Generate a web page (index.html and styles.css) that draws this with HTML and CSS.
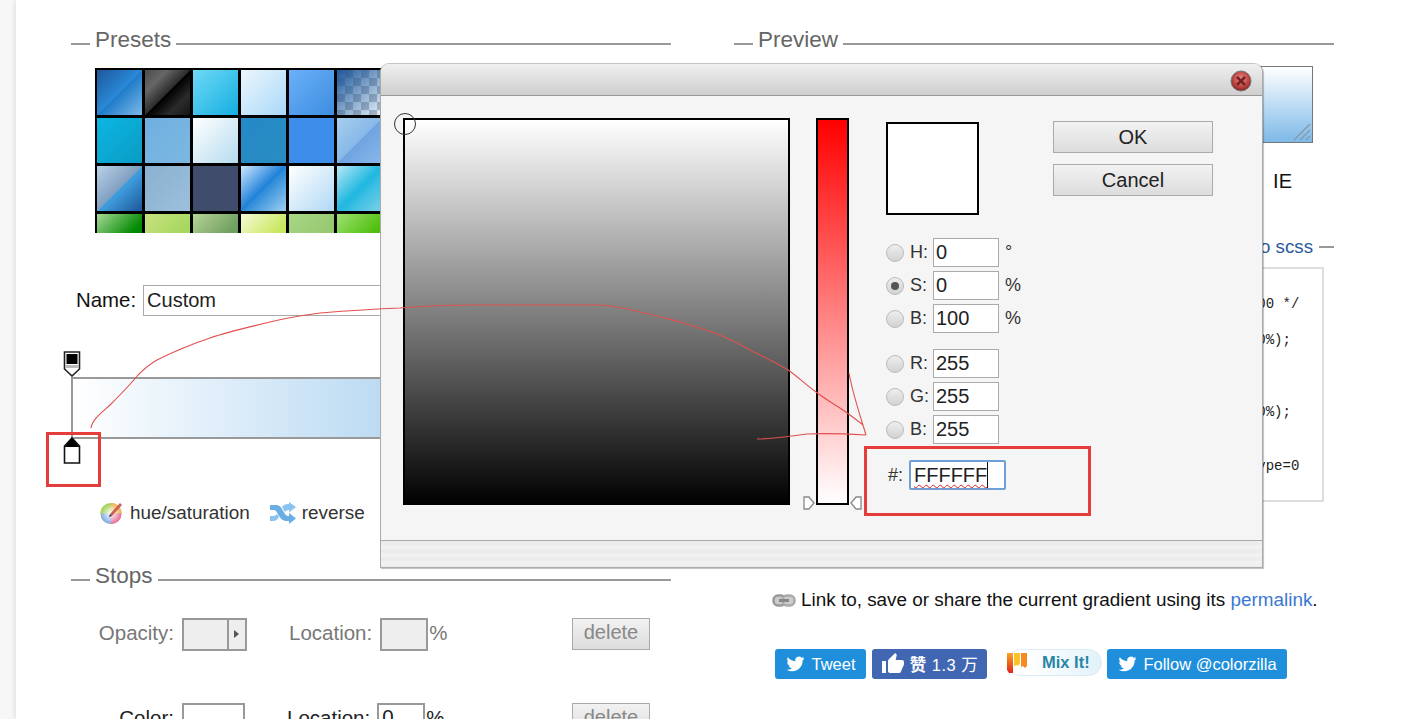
FILE: index.html
```html
<!DOCTYPE html>
<html lang="en">

<head>
  <meta charset="UTF-8">
  <meta name="viewport" content="width=device-width, initial-scale=1.0">
  <title>Gradient Editor</title>
  <link rel="stylesheet" href="styles.css">
</head>

<body>

  <div class="page">

    <div class="col-left">
      <h2 class="section-title"><span>Presets</span></h2>
      <div class="presets">
        <div class="swatch p1"></div><div class="swatch p2"></div><div class="swatch p3"></div><div class="swatch p4"></div><div class="swatch p5"></div><div class="swatch p6"></div>
        <div class="swatch p7"></div><div class="swatch p8"></div><div class="swatch p9"></div><div class="swatch p10"></div><div class="swatch p11"></div><div class="swatch p12"></div>
        <div class="swatch p13"></div><div class="swatch p14"></div><div class="swatch p15"></div><div class="swatch p16"></div><div class="swatch p17"></div><div class="swatch p18"></div>
        <div class="swatch p19"></div><div class="swatch p20"></div><div class="swatch p21"></div><div class="swatch p22"></div><div class="swatch p23"></div><div class="swatch p24"></div>
      </div>

      <div class="name-row">
        <label>Name:</label>
        <input type="text" class="name-input" value="Custom">
      </div>

      <div class="gradient-bar">
        <svg class="stop stop-top" width="18" height="26" viewBox="0 0 18 26">
          <path d="M1.500 1h15v17L9 25l-7.500-7z" fill="#fff" stroke="#222" stroke-width="1.600"/>
          <rect x="3.500" y="3" width="11" height="10" fill="#000"/>
          <rect x="2.500" y="14" width="13" height="3" fill="#bbb"/>
        </svg>
        <svg class="stop stop-bottom" width="18" height="28" viewBox="0 0 18 28">
          <path d="M9 1l7.500 8v17h-15V9z" fill="#fff" stroke="#111" stroke-width="1.600"/>
          <path d="M9 1l7.500 9h-15z" fill="#000"/>
        </svg>
      </div>

      <div class="bar-actions">
        <span class="action">
          <svg class="icon" width="25" height="25" viewBox="0 0 25 25">
            <defs>
              <radialGradient id="wheelFade">
                <stop offset="0" stop-color="#fff"/>
                <stop offset="1" stop-color="#fff" stop-opacity="0"/>
              </radialGradient>
            </defs>
            <circle cx="12" cy="13.500" r="10.500" fill="#9ccf4a"/>
            <path d="M12 13.500L12 3A10.500 10.500 0 0 1 22.500 13.500z" fill="#f2b04a"/>
            <path d="M12 13.500L22.500 13.500A10.500 10.500 0 0 1 12 24z" fill="#e86a9a"/>
            <path d="M12 13.500L12 24A10.500 10.500 0 0 1 1.500 13.500z" fill="#7fa8e8"/>
            <circle cx="12" cy="13.500" r="10.500" fill="url(#wheelFade)"/>
            <path d="M11 14L21 3l2 2-10 11z" fill="#c9605a"/>
            <path d="M11 14l2 2-3 1z" fill="#333"/>
          </svg>
          hue/saturation
        </span>
        <span class="action">
          <svg class="icon" width="26" height="22" viewBox="0 0 26 22">
            <path d="M0 3h6c3 0 5 2 6 4l3 5c1 1 2 2 3 2h1v-3l7 5.500-7 5.500v-3h-2c-4 0-6-2-8-5l-3-5c-1-1-2-1-3-1H0z" fill="#6aaee6"/>
            <path d="M0 14h3c2 0 3-1 4-2l2 3c-1 2-3 4-6 4H0z" fill="#8cc3ee"/>
            <path d="M12 5c2-2 3-3 6-3h1v-2l7 5-7 5.500V8h-1c-1 0-2 1-3 2z" fill="#8cc3ee"/>
          </svg>
          reverse
        </span>
      </div>

      <h2 class="section-title stops-title"><span>Stops</span></h2>

      <div class="stop-row muted">
        <label class="stop-label">Opacity:</label>
        <div class="box opacity-box"><span class="box-arrow"></span></div>
        <label class="loc-label">Location:</label>
        <div class="box loc-box"></div>
        <span class="pct">%</span>
        <button class="delete-btn">delete</button>
      </div>

      <div class="stop-row color-row">
        <label class="stop-label">Color:</label>
        <div class="box color-box"></div>
        <label class="loc-label">Location:</label>
        <div class="box loc-box white">0</div>
        <span class="pct">%</span>
        <button class="delete-btn">delete</button>
      </div>
    </div>

    <div class="col-right">
      <h2 class="section-title"><span>Preview</span></h2>
      <div class="preview">
        <svg class="grip" width="18" height="18" viewBox="0 0 18 18">
          <path d="M1 17L17 1M7 17L17 7M13 17l4-4" stroke="#8a9aa8" stroke-width="1.500"/>
        </svg>
      </div>
      <div class="preview-tabs">IE</div>
      <div class="code-title"><a href="#">switch to scss</a></div>
      <pre class="code">/* Permalink - colorzilla.com/gradient/#ffffff+0,7db9e8+1.00 */

background:linear-gradient(to right,#ffffff 0%, #7db9e8 100%);



background: -o-linear-gradient(left, #ffffff 0%,#7db9e8 100%);


     progid:DXImageTransform.Microsoft.gradient( GradientType=0</pre>
      <p class="permalink">
        <svg class="link-icon" width="24" height="13" viewBox="0 0 24 13">
          <rect x="1.500" y="1.500" width="12" height="10" rx="4.500" fill="#ccc" stroke="#999" stroke-width="2.500"/>
          <rect x="10.500" y="1.500" width="12" height="10" rx="4.500" fill="#ccc" stroke="#aaa" stroke-width="2.500"/>
          <rect x="7" y="5" width="10" height="3" fill="#888"/>
        </svg>
        <span>Link to, save or share the current gradient using its <a href="#">permalink</a>.</span>
      </p>
      <div class="social">
        <a class="social-btn tweet" href="#">
          <svg width="21" height="18" viewBox="0 0 24 24"><path fill="#fff" d="M23.953 4.570a10 10 0 01-2.825.775 4.958 4.958 0 002.163-2.723c-.951.555-2.005.959-3.127 1.184a4.920 4.920 0 00-8.384 4.482C7.690 8.095 4.067 6.130 1.640 3.162a4.822 4.822 0 00-.666 2.475c0 1.710.870 3.213 2.188 4.096a4.904 4.904 0 01-2.228-.616v.060a4.923 4.923 0 003.946 4.827 4.996 4.996 0 01-2.212.085 4.936 4.936 0 004.604 3.417 9.867 9.867 0 01-6.102 2.105c-.390 0-.779-.023-1.170-.067a13.995 13.995 0 007.557 2.209c9.053 0 13.998-7.496 13.998-13.985 0-.210 0-.420-.015-.630A9.935 9.935 0 0024 4.590z"/></svg>
          Tweet
        </a>
        <a class="social-btn like" href="#">
          <svg width="24" height="24" viewBox="0 0 24 24"><path fill="#fff" d="M1 21h4V9H1v12zm22-11c0-1.100-.9-2-2-2h-6.310l.95-4.570.03-.32c0-.41-.17-.79-.44-1.060L14.170 1 7.590 7.590C7.220 7.950 7 8.450 7 9v10c0 1.100.9 2 2 2h9c.83 0 1.540-.5 1.840-1.220l3.020-7.050c.09-.23.14-.47.14-.73v-2z"/></svg>
          <span class="like-text"><b>赞</b> 1.3 万</span>
        </a>
        <a class="mix" href="#">
          <svg width="21" height="21" viewBox="0 0 21 21">
            <defs>
              <linearGradient id="mixDrip" x1="0" y1="0" x2="0" y2="1">
                <stop offset="0" stop-color="#f9a51f"/>
                <stop offset="1" stop-color="#e2231f"/>
              </linearGradient>
            </defs>
            <path d="M0 1h6v20H2l-2-3z" fill="url(#mixDrip)"/>
            <path d="M7 1h6v10l-2 3-1-1-3 1z" fill="#f9c22a"/>
            <path d="M14 1h6v13l-2 2-2-2-2 1z" fill="#f58a1f"/>
          </svg>
          <span>Mix It!</span>
        </a>
        <a class="social-btn follow" href="#">
          <svg width="21" height="18" viewBox="0 0 24 24"><path fill="#fff" d="M23.953 4.570a10 10 0 01-2.825.775 4.958 4.958 0 002.163-2.723c-.951.555-2.005.959-3.127 1.184a4.920 4.920 0 00-8.384 4.482C7.690 8.095 4.067 6.130 1.640 3.162a4.822 4.822 0 00-.666 2.475c0 1.710.870 3.213 2.188 4.096a4.904 4.904 0 01-2.228-.616v.060a4.923 4.923 0 003.946 4.827 4.996 4.996 0 01-2.212.085 4.936 4.936 0 004.604 3.417 9.867 9.867 0 01-6.102 2.105c-.390 0-.779-.023-1.170-.067a13.995 13.995 0 007.557 2.209c9.053 0 13.998-7.496 13.998-13.985 0-.210 0-.420-.015-.630A9.935 9.935 0 0024 4.590z"/></svg>
          Follow @colorzilla
        </a>
      </div>
    </div>
  </div>

  <div class="dialog">
    <div class="dialog-title">
      <svg class="dialog-close" width="22" height="22" viewBox="0 0 22 22">
        <defs>
          <radialGradient id="closeRed" cx="0.5" cy="0.4" r="0.6">
            <stop offset="0" stop-color="#e58f8c"/>
            <stop offset="0.7" stop-color="#b8403e"/>
            <stop offset="1" stop-color="#7c1f1f"/>
          </radialGradient>
        </defs>
        <circle cx="11" cy="11" r="10" fill="url(#closeRed)" stroke="#777"/>
        <path d="M7 7l8 8M15 7l-8 8" stroke="#7a2020" stroke-width="2.500"/>
      </svg>
    </div>

    <div class="dialog-body">
      <div class="sb-field"><span class="sb-marker"></span></div>

      <div class="hue-bar">
        <svg class="hue-arrow hue-arrow-left" width="12" height="14" viewBox="0 0 12 14"><path d="M1 1h5l5 6-5 6H1z" fill="#fff" stroke="#888" stroke-width="1.300"/></svg>
        <svg class="hue-arrow hue-arrow-right" width="12" height="14" viewBox="0 0 12 14"><path d="M11 1H6L1 7l5 6h5z" fill="#fff" stroke="#888" stroke-width="1.300"/></svg>
      </div>

      <div class="controls">
        <div class="color-preview"></div>
        <div class="field-group first">
          <div class="field"><span class="radio"></span><label>H:</label><input type="text" value="0"><span class="unit">°</span></div>
          <div class="field"><span class="radio checked"></span><label>S:</label><input type="text" value="0"><span class="unit">%</span></div>
          <div class="field"><span class="radio"></span><label>B:</label><input type="text" value="100"><span class="unit">%</span></div>
        </div>
        <div class="field-group">
          <div class="field"><span class="radio"></span><label>R:</label><input type="text" value="255"></div>
          <div class="field"><span class="radio"></span><label>G:</label><input type="text" value="255"></div>
          <div class="field"><span class="radio"></span><label>B:</label><input type="text" value="255"></div>
        </div>
        <div class="hex-row">
          <label>#:</label>
          <div class="hex-input"><span class="hex-text">FFFFFF</span></div>
        </div>
      </div>

      <div class="dialog-buttons">
        <button class="dialog-btn">OK</button>
        <button class="dialog-btn">Cancel</button>
      </div>
    </div>

    <div class="dialog-footer"></div>
  </div>

  <svg class="annotations" width="1413" height="719" viewBox="0 0 1413 719">
    <path d="M91 428C92 420 100 414 110 405C118 397 130 385 138 375C144 369 150 364 157 360C175 351 192 344 210 338C230 331 250 327 270 322C290 317 305 315 320 313C345 311 375 309 400 308C425 306 445 305 470 305H600C615 306 628 309 640 312C655 315 668 319 680 322C700 328 710 331 720 335C732 340 740 344 750 350C765 358 776 362 788 370C797 376 806 385 816 392C825 399 834 404 843 410C850 415 857 420 863 425L866 435C860 415 853 395 849 373M866 435C848 434 825 433 807 434C790 436 775 439 757 439" fill="none" stroke="#e0504f" stroke-width="1.100"/>
    <rect x="47.500" y="433.500" width="52" height="52" fill="none" stroke="#e53c3c" stroke-width="3"/>
    <rect x="865.500" y="447.500" width="224" height="67" fill="none" stroke="#e53c3c" stroke-width="3"/>
  </svg>

</body>

</html>
```

FILE: styles.css
```css
html,
body {
  height: 100%;
  overflow: hidden;
}

body {
  margin: 0;
  font-family: "Liberation Sans", Arial, sans-serif;
  font-size: 20px;
  color: #111;
  background-color: #f7f7f7;
}

a {
  text-decoration: none;
}

.page {
  display: flex;
  gap: 63px;
  height: 100%;
  margin-left: 16px;
  padding: 27px 0 0 55px;
  box-sizing: border-box;
  background-color: #fff;
  box-shadow: -2px 0 4px rgba(0, 0, 0, 0.08);
}

.col-left {
  width: 600px;
  flex: none;
}

.col-right {
  width: 600px;
  flex: none;
}

/* heading with a rule on both sides */
.section-title {
  display: flex;
  align-items: center;
  gap: 5px;
  margin: 0;
  height: 26px;
  font-size: 22.5px;
  line-height: 26px;
  font-weight: normal;
  color: #666;
}

.section-title::before {
  content: "";
  width: 19px;
  height: 2px;
  margin-top: 7px;
  background-color: #999;
}

.section-title::after {
  content: "";
  flex: 1;
  height: 2px;
  margin-top: 7px;
  background-color: #999;
}

/* presets */
.presets {
  display: grid;
  grid-template-columns: repeat(6, 45px);
  grid-auto-rows: 45px;
  gap: 3px;
  width: 288px;
  height: 163px;
  margin: 15px 0 0 24px;
  padding: 2px 0 0 2px;
  overflow: hidden;
  background-color: #000;
}

.p1 { background: linear-gradient(135deg, #1e5799 0%, #2989d8 50%, #207cca 51%, #7db9e8 100%); }
.p2 { background: linear-gradient(135deg, #4c4c4c 0%, #666 25%, #2c2c2c 50%, #000 51%, #2b2b2b 76%, #131313 100%); }
.p3 { background: linear-gradient(135deg, #70d9f6 0%, #14aee0 100%); }
.p4 { background: linear-gradient(135deg, #ecf6fd 0%, #a9d9f9 100%); }
.p5 { background: linear-gradient(135deg, #6bb0f9 0%, #3d8de0 100%); }
.p6 {
  background:
    linear-gradient(135deg, #1e5799 0%, rgba(125, 185, 232, 0.2) 100%),
    repeating-conic-gradient(#bbb 0 25%, #fff 0 50%) 0 0 / 16px 16px;
}
.p7 { background: linear-gradient(135deg, #0cb6e3 0%, #0a9cc4 100%); }
.p8 { background: linear-gradient(135deg, #6fafe1 0%, #7cb8e0 100%); }
.p9 { background: linear-gradient(135deg, #fff 0%, #b5dcef 100%); }
.p10 { background: linear-gradient(135deg, #2389c8 0%, #2a8cc0 100%); }
.p11 { background: #3c8eea; }
.p12 { background: linear-gradient(135deg, #a7cfef 0%, #87b8e8 50%, #6fa4e0 51%, #8ab8ec 100%); }
.p13 { background: linear-gradient(135deg, #bcd2e8 0%, #7f9fc0 50%, #3f9fe0 51%, #1e5799 100%); }
.p14 { background: linear-gradient(135deg, #8ab0d0 0%, #9cc0dc 100%); }
.p15 { background: #3f4c6b; }
.p16 { background: linear-gradient(135deg, #d0e8ff 0%, #1e80d8 50%, #2989d8 51%, #a0d0f0 100%); }
.p17 { background: linear-gradient(135deg, #fff 0%, #b0d8f5 100%); }
.p18 { background: linear-gradient(135deg, #b8e8f5 0%, #20b8e0 50%, #80d0e8 100%); }
.p19 { background: linear-gradient(135deg, #a8d898 0%, #008a00 60%); }
.p20 { background: linear-gradient(135deg, #c8e080 0%, #a8d860 60%); }
.p21 { background: linear-gradient(135deg, #b8d498 0%, #70a060 60%); }
.p22 { background: linear-gradient(135deg, #f7fbd8 0%, #c8e860 60%); }
.p23 { background: linear-gradient(135deg, #a8d888 0%, #98c870 60%); }
.p24 { background: linear-gradient(135deg, #a0e070 0%, #50c010 60%); }

/* name + gradient bar */
.name-row {
  display: flex;
  align-items: center;
  gap: 7px;
  margin: 52px 0 0 5px;
  font-size: 20.4px;
}

.name-input {
  flex: 1;
  height: 31px;
  padding: 0 3px;
  border: 1px solid #aaa;
  box-sizing: border-box;
  font: 20px "Liberation Sans", Arial, sans-serif;
  color: #222;
}

.gradient-bar {
  position: relative;
  height: 62px;
  margin-top: 61px;
  border: 2px solid #999;
  border-right: 0;
  box-sizing: border-box;
  background: linear-gradient(to right, #fff 0%, #7db9e8 100%);
}

.stop {
  position: absolute;
  left: -10px;
}

.stop-top {
  top: -28px;
}

.stop-bottom {
  bottom: -28px;
}

.bar-actions {
  display: flex;
  gap: 20px;
  margin: 61px 0 0 28px;
  font-size: 18.9px;
  line-height: 25px;
  color: #333;
}

.action {
  display: flex;
  align-items: center;
  gap: 6px;
}

/* stops */
.stops-title {
  margin-top: 38px;
}

.stop-row {
  display: flex;
  align-items: center;
  height: 33px;
  margin-top: 29px;
  font-size: 20.5px;
  color: #222;
}

.stop-row.muted {
  color: #777;
}

.stop-row label,
.stop-row .pct {
  padding-bottom: 4px;
}

.color-row {
  margin-top: 52px;
}

.stop-label {
  width: 103px;
  margin-right: 8px;
  text-align: right;
}

.loc-label {
  margin: 0 8px 0 42px;
}

.color-row .loc-label {
  margin-right: 7px;
}

.box {
  position: relative;
  height: 33px;
  border: 2px solid #999;
  box-sizing: border-box;
  background-color: #eee;
}

.opacity-box {
  width: 65px;
}

.box-arrow {
  position: absolute;
  top: 0;
  right: 0;
  bottom: 0;
  width: 16px;
  border-left: 2px solid #999;
}

.box-arrow::after {
  content: "";
  position: absolute;
  top: 10px;
  left: 5px;
  border: 4px solid transparent;
  border-left: 5px solid #555;
}

.loc-box {
  width: 48px;
}

.box.white {
  padding-left: 3px;
  background-color: #fff;
}

.color-box {
  width: 63px;
  background-color: #fff;
}

.pct {
  margin-left: 1px;
}

.delete-btn {
  width: 78px;
  height: 32px;
  margin: 0 21px 1px auto;
  padding-bottom: 4px;
  border: 1px solid #aaa;
  background: linear-gradient(#f2f2f2, #dcdcdc);
  font: 20px "Liberation Sans", Arial, sans-serif;
  color: #888;
}

/* right column */
.preview {
  position: relative;
  height: 77px;
  margin: 13px 21px 0 24px;
  border: 1px solid #777;
  box-sizing: border-box;
  background: linear-gradient(#fff, #7db9e8);
}

.grip {
  position: absolute;
  right: 1px;
  bottom: 1px;
}

.preview-tabs {
  margin-top: 26px;
  padding-right: 42px;
  text-align: right;
  line-height: 24px;
}

.code-title {
  display: flex;
  align-items: center;
  justify-content: flex-end;
  gap: 6px;
  height: 24px;
  margin-top: 42px;
  font-size: 18.7px;
}

.code-title a {
  color: #2a5a9a;
}

.code-title::after {
  content: "";
  width: 15px;
  height: 2px;
  background-color: #999;
}

.code {
  width: 566px;
  height: 235px;
  margin: 8px 0 0 24px;
  padding: 26px 0 0 10px;
  border: 2px solid #ddd;
  box-sizing: border-box;
  overflow: hidden;
  font: 14px/18px "Liberation Mono", monospace;
  color: #222;
}

.permalink {
  display: flex;
  align-items: center;
  gap: 5px;
  height: 24px;
  margin: 86px 0 0 38px;
  font-size: 18.9px;
  white-space: nowrap;
}

.permalink a {
  color: #3a78d4;
}

.social {
  display: flex;
  margin: 37px 0 0 41px;
}

.social-btn {
  display: flex;
  align-items: center;
  justify-content: center;
  gap: 5px;
  height: 30px;
  border-radius: 3px;
  font-size: 16.5px;
  color: #fff;
  background-color: #1f8fdc;
}

.tweet {
  width: 91px;
}

.like {
  width: 115px;
  margin-left: 6px;
  background-color: #4267b2;
}

.like-text {
  font-family: "Liberation Sans", "Noto Sans CJK SC", sans-serif;
  letter-spacing: 0.5px;
}

.mix {
  display: flex;
  align-items: center;
  gap: 14px;
  width: 95px;
  height: 27px;
  margin-left: 20px;
  border-radius: 14px;
  box-sizing: border-box;
  border: 1px solid #dcecf3;
  background: linear-gradient(to right, #fff 20%, #e2f2f9);
  font-size: 16.5px;
  font-weight: bold;
  color: #2a85a5;
}

.mix svg {
  margin-left: -1px;
}

.follow {
  width: 180px;
  margin-left: 5px;
}

/* colour picker dialog */
.dialog {
  position: absolute;
  top: 63px;
  left: 380px;
  display: flex;
  flex-direction: column;
  width: 883px;
  height: 505px;
  border: 1px solid #aaa;
  border-top-color: #c4c4c4;
  border-radius: 9px 9px 0 0;
  box-sizing: border-box;
  background-color: #f5f5f5;
  box-shadow: 1px 1px 1px rgba(0, 0, 0, 0.25);
}

.dialog-title {
  position: relative;
  flex: none;
  height: 32px;
  border-bottom: 1px solid #999;
  border-radius: 8px 8px 0 0;
  box-sizing: border-box;
  background: linear-gradient(#efefef, #cfcfcf);
}

.dialog-close {
  position: absolute;
  top: 6px;
  right: 10px;
}

.dialog-body {
  display: flex;
  flex: 1;
  padding: 22px 0 0 22px;
}

.sb-field {
  position: relative;
  flex: none;
  width: 387px;
  height: 387px;
  border: 2px solid #000;
  border-bottom: 0;
  box-sizing: border-box;
  background: linear-gradient(#fff, #000);
}

.sb-marker {
  position: absolute;
  top: -7px;
  left: -11px;
  width: 22px;
  height: 22px;
  border: 1.5px solid #333;
  border-radius: 50%;
  box-sizing: border-box;
}

.hue-bar {
  position: relative;
  flex: none;
  width: 33px;
  height: 387px;
  margin-left: 26px;
  border: 2px solid #000;
  box-sizing: border-box;
  background: linear-gradient(#f00, #fff);
}

.hue-arrow {
  position: absolute;
  bottom: -7px;
}

.hue-arrow-left {
  left: -15px;
}

.hue-arrow-right {
  right: -15px;
}

.controls {
  flex: none;
  width: 144px;
  margin-left: 37px;
}

.color-preview {
  width: 93px;
  height: 93px;
  margin-top: 4px;
  border: 2px solid #000;
  box-sizing: border-box;
  background-color: #fff;
}

.field-group {
  display: flex;
  flex-direction: column;
  gap: 4px;
  margin-top: 16px;
}

.field-group.first {
  margin-top: 23px;
}

.field {
  display: flex;
  align-items: center;
  height: 29px;
  color: #333;
}

.field label {
  width: 23px;
  margin-left: 6px;
  font-size: 18px;
}

.field input {
  width: 66px;
  height: 29px;
  padding: 0 2px;
  border: 1px solid #aaa;
  box-sizing: border-box;
  font: 20px "Liberation Sans", Arial, sans-serif;
  color: #222;
}

.unit {
  margin-left: 6px;
  font-size: 18px;
}

.radio {
  position: relative;
  flex: none;
  width: 18px;
  height: 18px;
  border: 1px solid #bbb;
  border-radius: 50%;
  box-sizing: border-box;
  background: linear-gradient(#eee, #d2d2d2);
}

.radio.checked::after {
  content: "";
  position: absolute;
  top: 4px;
  left: 4px;
  width: 8px;
  height: 8px;
  border-radius: 50%;
  background-color: #555;
}

.hex-row {
  display: flex;
  align-items: center;
  height: 30px;
  margin-top: 16px;
  padding-left: 2px;
  color: #333;
}

.hex-row label {
  width: 21px;
  font-size: 18px;
}

.hex-input {
  width: 97px;
  height: 30px;
  padding: 0 3px;
  border: 2px solid #6f9fd8;
  border-radius: 2px;
  box-sizing: border-box;
  background-color: #fff;
  font-size: 20px;
  line-height: 26px;
}

.hex-text {
  display: inline-block;
  border-right: 1px solid #111;
  text-decoration: underline wavy #d22;
  text-decoration-thickness: 1px;
  text-underline-offset: 2px;
  color: #222;
}

.dialog-buttons {
  display: flex;
  flex-direction: column;
  gap: 11px;
  margin: 3px 0 0 23px;
}

.dialog-btn {
  width: 160px;
  height: 32px;
  border: 1px solid #aaa;
  background: linear-gradient(#f2f2f2, #dcdcdc);
  font: 20px "Liberation Sans", Arial, sans-serif;
  color: #222;
}

.dialog-footer {
  flex: none;
  height: 27px;
  border-top: 1px solid #aaa;
  box-sizing: border-box;
  background: repeating-linear-gradient(#ececec 0 4px, #f1f1f1 4px 8px);
}

/* hand drawn marks on top of the screenshot */
.annotations {
  position: absolute;
  top: 0;
  left: 0;
  pointer-events: none;
}
```
